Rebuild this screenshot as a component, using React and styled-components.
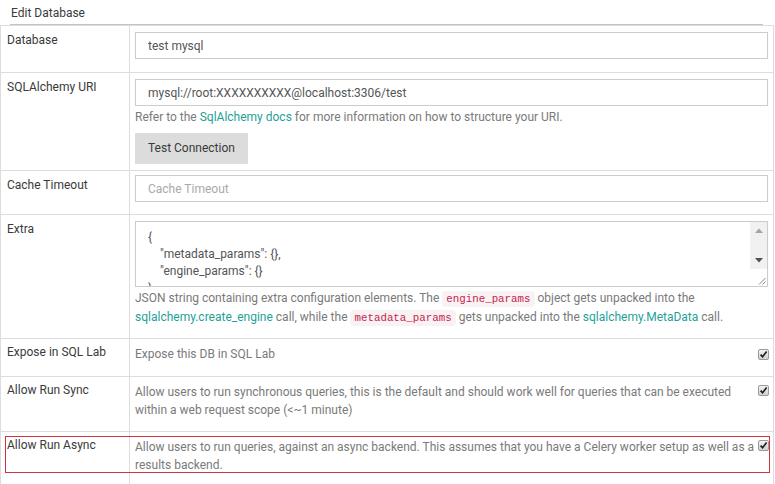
import React from 'react';
import styled, { createGlobalStyle } from 'styled-components';

const GlobalStyle = createGlobalStyle`
  html, body { margin: 0; padding: 0; background: #fff; }
  body {
    font-family: Roboto, "Liberation Sans", Arial, sans-serif;
    font-size: 12px;
    color: #3a3a3a;
  }
  * { box-sizing: border-box; }
`;

const Page = styled.div`
  width: 774px;
`;

const Legend = styled.div`
  margin-left: 10px;
  width: 753px;
  height: 25px;
  padding-top: 2px;
  line-height: 22px;
  padding-left: 1px;
  border-bottom: 1px solid #c4c4c4;
  color: #3a3a3a;
`;

const Table = styled.div`
  border: 1px solid #dddddd;
  border-bottom: none;
`;

const Row = styled.div`
  display: grid;
  grid-template-columns: 129px 1fr;
  border-bottom: 1px solid #dddddd;
  position: relative;
  ${(p) =>
    p.$highlight &&
    `
    &::after {
      content: '';
      position: absolute;
      left: 4px;
      right: 3px;
      top: 4px;
      height: 35px;
      border: 1px solid #d0343f;
      pointer-events: none;
    }
  `}
`;

const LabelCell = styled.div`
  padding: ${(p) => (p.$compact ? '5px' : '6px')} 6px 5px 6px;
  line-height: 17px;
  border-right: 1px solid #dddddd;
  color: #3a3a3a;
`;

const ValueCell = styled.div`
  padding: 6px 5px ${(p) => p.$pb || 6}px 5px;
  min-width: 0;
`;

const Input = styled.input`
  display: block;
  width: 100%;
  height: 27px;
  padding: 0 12px;
  border: 1px solid #cccccc;
  border-radius: 0;
  font-family: Roboto, "Liberation Sans", Arial, sans-serif;
  font-size: 12px;
  color: #555;
  background: #fff;
  margin-top: ${(p) => p.$mt || 0}px;
  margin-bottom: ${(p) => p.$mb || 0}px;
  outline: none;
  &::placeholder { color: #a9a9a9; }
`;

const Help = styled.div`
  margin-top: 2px;
  line-height: 18px;
  color: #7a7a7a;
`;

const Link = styled.a`
  color: #1fa197;
  text-decoration: none;
`;

const Code = styled.code`
  font-family: "Liberation Mono", "DejaVu Sans Mono", monospace;
  font-size: 10.8px;
  padding: 2px 4px;
  color: #c7254e;
  background: #f9f2f4;
  border-radius: 4px;
`;

const Button = styled.button`
  display: block;
  margin-top: 7px;
  height: 31px;
  padding: 0 13px 1px;
  border: none;
  border-radius: 0;
  background: #dcdcdc;
  color: #3a3a3a;
  font-family: Roboto, "Liberation Sans", Arial, sans-serif;
  font-size: 12px;
`;

const TextAreaBox = styled.div`
  display: flex;
  height: 66px;
  border: 1px solid #cccccc;
  background: #fff;
`;

const TextArea = styled.textarea`
  flex: 1;
  border: none;
  resize: none;
  overflow: hidden;
  padding: 7px 12px 0;
  font-family: Roboto, "Liberation Sans", Arial, sans-serif;
  font-size: 12px;
  line-height: 17px;
  color: #555;
  white-space: pre;
  outline: none;
`;

const ScrollSide = styled.div`
  width: 17px;
  display: flex;
  flex-direction: column;
`;

const Track = styled.div`
  flex: 1;
  background: #f1f1f1;
  display: flex;
  flex-direction: column;
  justify-content: space-between;
`;

const ArrowBtn = styled.div`
  height: 17px;
  display: flex;
  align-items: center;
  justify-content: center;
`;

const Resizer = styled.div`
  height: 17px;
  background: #fff;
  display: flex;
  align-items: flex-end;
  justify-content: flex-end;
`;

const CheckBody = styled.div`
  display: flex;
  align-items: flex-start;
  line-height: 18px;
  color: #7a7a7a;
`;

const CheckText = styled.div`
  flex: 1;
  min-width: 0;
`;

const CheckBoxWrap = styled.span`
  flex: none;
  width: 11px;
  height: 11px;
  margin-top: ${(p) => p.$mt ?? 1}px;
  margin-right: -1px;
  display: block;
`;

const Arrow = ({ up, color }) => (
  <svg width="8" height="5" viewBox="0 0 8 5">
    {up ? <path d="M0 5 L4 0.5 L8 5 Z" fill={color} /> : <path d="M0 0 L8 0 L4 4.5 Z" fill={color} />}
  </svg>
);

const Grip = () => (
  <svg width="8" height="8" viewBox="0 0 8 8" style={{ marginRight: 1, marginBottom: 1 }}>
    <path d="M7.5 1 L1 7.5 M7.5 4.5 L4.5 7.5" stroke="#8a8a8a" strokeWidth="1" />
  </svg>
);

const CheckBox = ({ mt }) => (
  <CheckBoxWrap $mt={mt}>
    <svg width="11" height="11" viewBox="0 0 11 11">
      <defs>
        <linearGradient id="cbg" x1="0" y1="0" x2="0" y2="1">
          <stop offset="0" stopColor="#f4f4f4" />
          <stop offset="1" stopColor="#cfcfcf" />
        </linearGradient>
      </defs>
      <rect x="0.5" y="0.5" width="10" height="10" rx="1.5" fill="url(#cbg)" stroke="#9a9a9a" />
      <path d="M2.6 5.6 L4.6 7.8 L8.6 2.6" fill="none" stroke="#1e1e1e" strokeWidth="1.7" />
    </svg>
  </CheckBoxWrap>
);

const extraValue = `{\n    "metadata_params": {},\n    "engine_params": {}\n}`;

export default function App() {
  return (
    <Page>
      <GlobalStyle />
      <Legend>Edit Database</Legend>
      <Table>
        <Row>
          <LabelCell>Database</LabelCell>
          <ValueCell>
            <Input $mb={7} defaultValue="test mysql" />
          </ValueCell>
        </Row>
        <Row>
          <LabelCell>SQLAlchemy URI</LabelCell>
          <ValueCell>
            <Input defaultValue="mysql://root:XXXXXXXXXX@localhost:3306/test" />
            <Help>
              Refer to the <Link href="#">SqlAlchemy docs</Link> for more information on how to structure your URI.
            </Help>
            <Button>Test Connection</Button>
          </ValueCell>
        </Row>
        <Row>
          <LabelCell>Cache Timeout</LabelCell>
          <ValueCell $pb={6}>
            <Input $mt={-2} $mb={6} placeholder="Cache Timeout" />
          </ValueCell>
        </Row>
        <Row>
          <LabelCell>Extra</LabelCell>
          <ValueCell $pb={11}>
            <TextAreaBox>
              <TextArea readOnly value={extraValue} />
              <ScrollSide>
                <Track>
                  <ArrowBtn>
                    <Arrow up color="#a3a3a3" />
                  </ArrowBtn>
                  <ArrowBtn>
                    <Arrow color="#505050" />
                  </ArrowBtn>
                </Track>
                <Resizer>
                  <Grip />
                </Resizer>
              </ScrollSide>
            </TextAreaBox>
            <Help>
              JSON string containing extra configuration elements. The <Code>engine_params</Code> object gets unpacked into the{' '}
              <Link href="#">sqlalchemy.create_engine</Link> call, while the <Code>metadata_params</Code> gets unpacked into the{' '}
              <Link href="#">sqlalchemy.MetaData</Link> call.
            </Help>
          </ValueCell>
        </Row>
        <Row>
          <LabelCell $compact>Expose in SQL Lab</LabelCell>
          <ValueCell $pb={13}>
            <CheckBody>
              <CheckText>Expose this DB in SQL Lab</CheckText>
              <CheckBox mt={2} />
            </CheckBody>
          </ValueCell>
        </Row>
        <Row>
          <LabelCell $compact>Allow Run Sync</LabelCell>
          <ValueCell $pb={12}>
            <CheckBody>
              <CheckText>
                Allow users to run synchronous queries, this is the default and should work well for queries that can be
                executed within a web request scope (&lt;~1 minute)
              </CheckText>
              <CheckBox mt={0} />
            </CheckBody>
          </ValueCell>
        </Row>
        <Row $highlight>
          <LabelCell $compact>Allow Run Async</LabelCell>
          <ValueCell $pb={13}>
            <CheckBody>
              <CheckText>
                Allow users to run queries, against an async backend. This assumes that you have a Celery worker setup as
                well as a results backend.
              </CheckText>
              <CheckBox mt={0} />
            </CheckBody>
          </ValueCell>
        </Row>
      </Table>
    </Page>
  );
}
